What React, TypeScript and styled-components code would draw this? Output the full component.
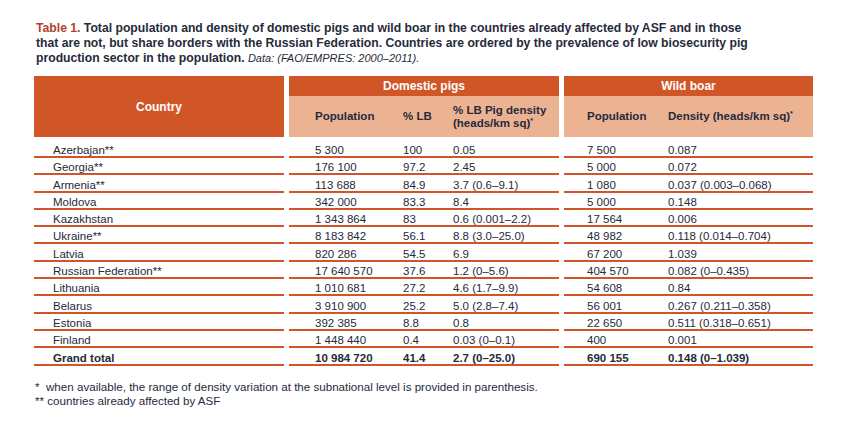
import React from "react";
import styled, { createGlobalStyle } from "styled-components";

const Global = createGlobalStyle`
  html, body { margin: 0; padding: 0; background: #ffffff; }
  body { font-family: "Liberation Sans", Arial, Helvetica, sans-serif; color: #262a3b; }
`;

const ORANGE = "#d15627";
const PEACH = "#ecb393";
const LINE = "#d15627";

const Page = styled.div`
  width: 847px;
  height: 434px;
  box-sizing: border-box;
  padding: 21px 0 0 34px;
`;

const Title = styled.div`
  margin-left: 2px;
  font-size: 12.2px;
  line-height: 15px;
  font-weight: bold;
  color: #262a3b;
  white-space: nowrap;
`;

const TitleLabel = styled.span`
  color: #b0432a;
`;

const Source = styled.span`
  font-style: italic;
  font-weight: normal;
  font-size: 11px;
`;

const TableWrap = styled.div`
  margin-top: 10px;
  width: 779px;
  font-size: 11.5px;
`;

const Header = styled.div`
  display: grid;
  grid-template-columns: 250px 270px 249px;
  grid-template-rows: 20px 41px;
  column-gap: 5px;
`;

const CountryHead = styled.div`
  grid-row: 1 / 3;
  grid-column: 1;
  background: ${ORANGE};
  color: #ffffff;
  font-weight: bold;
  font-size: 12px;
  display: flex;
  align-items: center;
  justify-content: center;
`;

const GroupHead = styled.div<{ $col: number }>`
  grid-row: 1;
  grid-column: ${(p) => p.$col};
  background: ${ORANGE};
  color: #ffffff;
  font-weight: bold;
  font-size: 12px;
  display: flex;
  align-items: center;
  justify-content: center;
`;

const SubHead = styled.div<{ $col: number; $cols: string; $pad: number }>`
  grid-row: 2;
  grid-column: ${(p) => p.$col};
  background: ${PEACH};
  display: grid;
  grid-template-columns: ${(p) => p.$cols};
  padding-left: ${(p) => p.$pad}px;
  align-items: center;
  font-weight: bold;
  font-size: 11.5px;
  line-height: 13px;
`;

const Sup = styled.span`
  font-size: 7px;
  vertical-align: top;
  line-height: 8px;
`;

const Row = styled.div<{ $first?: boolean }>`
  display: grid;
  grid-template-columns: 250px 270px 249px;
  column-gap: 5px;
  height: ${(p) => (p.$first ? 21 : 17.3)}px;
`;

const Group = styled.div<{ $cols: string; $pad: number; $bold?: boolean }>`
  display: grid;
  grid-template-columns: ${(p) => p.$cols};
  padding-left: ${(p) => p.$pad}px;
  border-bottom: 2px solid ${LINE};
  align-items: end;
  padding-bottom: 0;
  line-height: 11px;
  font-weight: ${(p) => (p.$bold ? "bold" : "normal")};
  white-space: nowrap;
`;

const Footer = styled.div`
  margin-top: 14px;
  margin-left: 1px;
  font-size: 11.6px;
  line-height: 14px;
  color: #262a3b;
`;

const Star = styled.span`
  display: inline-block;
  width: 11px;
`;

const DOM_COLS = "88px 50px 1fr";
const WILD_COLS = "81px 1fr";

type R = [string, string, string, string, string, string];

const rows: R[] = [
  ["Azerbajan**", "5 300", "100", "0.05", "7 500", "0.087"],
  ["Georgia**", "176 100", "97.2", "2.45", "5 000", "0.072"],
  ["Armenia**", "113 688", "84.9", "3.7 (0.6\u20139.1)", "1 080", "0.037 (0.003\u20130.068)"],
  ["Moldova", "342 000", "83.3", "8.4", "5 000", "0.148"],
  ["Kazakhstan", "1 343 864", "83", "0.6 (0.001\u20132.2)", "17 564", "0.006"],
  ["Ukraine**", "8 183 842", "56.1", "8.8 (3.0\u201325.0)", "48 982", "0.118 (0.014\u20130.704)"],
  ["Latvia", "820 286", "54.5", "6.9", "67 200", "1.039"],
  ["Russian Federation**", "17 640 570", "37.6", "1.2 (0\u20135.6)", "404 570", "0.082 (0\u20130.435)"],
  ["Lithuania", "1 010 681", "27.2", "4.6 (1.7\u20139.9)", "54 608", "0.84"],
  ["Belarus", "3 910 900", "25.2", "5.0 (2.8\u20137.4)", "56 001", "0.267 (0.211\u20130.358)"],
  ["Estonia", "392 385", "8.8", "0.8", "22 650", "0.511 (0.318\u20130.651)"],
  ["Finland", "1 448 440", "0.4", "0.03 (0\u20130.1)", "400", "0.001"],
  ["Grand total", "10 984 720", "41.4", "2.7 (0\u201325.0)", "690 155", "0.148 (0\u20131.039)"],
];

export default function App() {
  return (
    <Page>
      <Global />
      <Title>
        <TitleLabel>Table 1.</TitleLabel> Total population and density of domestic pigs and wild boar in the countries already affected by ASF and in those
        <br />
        that are not, but share borders with the Russian Federation. Countries are ordered by the prevalence of low biosecurity pig
        <br />
        production sector in the population. <Source>Data: (FAO/EMPRES: 2000–2011).</Source>
      </Title>
      <TableWrap>
        <Header>
          <CountryHead>Country</CountryHead>
          <GroupHead $col={2}>Domestic pigs</GroupHead>
          <GroupHead $col={3}>Wild boar</GroupHead>
          <SubHead $col={2} $cols={DOM_COLS} $pad={26}>
            <span>Population</span>
            <span>% LB</span>
            <span>
              % LB Pig density
              <br />
              (heads/km sq)<Sup>*</Sup>
            </span>
          </SubHead>
          <SubHead $col={3} $cols={WILD_COLS} $pad={23}>
            <span>Population</span>
            <span>
              Density (heads/km sq)<Sup>*</Sup>
            </span>
          </SubHead>
        </Header>
        {rows.map((r, i) => {
          const bold = i === rows.length - 1;
          return (
            <Row key={r[0]} $first={i === 0}>
              <Group $cols="1fr" $pad={19} $bold={bold}>
                <span>{r[0]}</span>
              </Group>
              <Group $cols={DOM_COLS} $pad={26} $bold={bold}>
                <span>{r[1]}</span>
                <span>{r[2]}</span>
                <span>{r[3]}</span>
              </Group>
              <Group $cols={WILD_COLS} $pad={23} $bold={bold}>
                <span>{r[4]}</span>
                <span>{r[5]}</span>
              </Group>
            </Row>
          );
        })}
      </TableWrap>
      <Footer>
        <div>
          <Star>*</Star>when available, the range of density variation at the subnational level is provided in parenthesis.
        </div>
        <div>** countries already affected by ASF</div>
      </Footer>
    </Page>
  );
}
